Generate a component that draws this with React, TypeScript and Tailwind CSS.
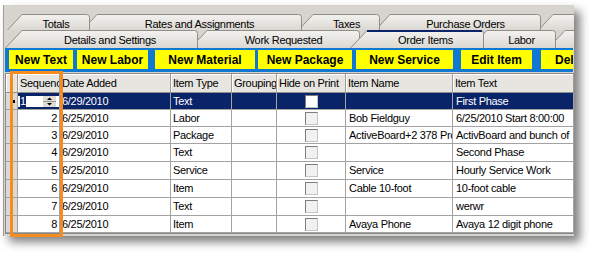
import React from "react";

type TabProps = {
  label: string;
  w: number;
  h: number;
  s: number;
  cls: string;
  id: string;
  selected?: boolean;
  labelCls: string;
};

function Tab({ label, w, h, s, cls, id, selected, labelCls }: TabProps) {
  const d = `M0.5,${h + 1} L${s},0.5 L${w - 3.5},0.5 Q${w - 0.5},0.5 ${w - 0.5},3.5 L${w - 0.5},${h + 1}`;
  return (
    <div className={`relative shrink-0 ${cls}`}>
      <svg className="absolute left-0 top-0" width={w} height={h + 1} viewBox={`0 0 ${w} ${h + 1}`}>
        <defs>
          <linearGradient id={id} x1="0" y1="0" x2="0" y2="1">
            <stop offset="0" stopColor="#f3f2ef" />
            <stop offset="1" stopColor="#dbd8d2" />
          </linearGradient>
        </defs>
        <path d={d} fill={`url(#${id})`} stroke="#8e8d8a" strokeWidth="1" />
        {selected && <line x1={s} y1="1" x2={w - 2} y2="1" stroke="#0a246a" strokeWidth="2" />}
      </svg>
      <div className={`relative flex h-full justify-center whitespace-nowrap text-[11px] leading-none tracking-[-0.3px] text-black ${labelCls}`}>
        {label}
      </div>
    </div>
  );
}

const colW = ["w-[12px]", "w-[42px]", "w-[111px]", "w-[61px]", "w-[45px]", "w-[69px]", "w-[107px]", "w-[121px]"];

const rows = [
  { seq: "1", date: "6/29/2010", type: "Text", name: "", text: "First Phase", sel: true, h: "h-[17px]" },
  { seq: "2", date: "6/25/2010", type: "Labor", name: "Bob Fieldguy", text: "6/25/2010 Start 8:00:00", h: "h-[17px]" },
  { seq: "3", date: "6/29/2010", type: "Package", name: "ActiveBoard+2 378 Pro", text: "ActivBoard and bunch of", h: "h-[17px]" },
  { seq: "4", date: "6/29/2010", type: "Text", name: "", text: "Second Phase", h: "h-[18px]" },
  { seq: "5", date: "6/25/2010", type: "Service", name: "Service", text: "Hourly Service Work", h: "h-[18px]" },
  { seq: "6", date: "6/29/2010", type: "Item", name: "Cable 10-foot", text: "10-foot cable", h: "h-[18px]" },
  { seq: "7", date: "6/29/2010", type: "Text", name: "", text: "werwr", h: "h-[18px]" },
  { seq: "8", date: "6/25/2010", type: "Item", name: "Avaya Phone", text: "Avaya 12 digit phone", h: "h-[17px]" },
];

function Check({ white }: { white?: boolean }) {
  return (
    <div
      className={`h-[13px] w-[13px] border border-b-[#c4c4c4] border-l-[#7c7c7c] border-r-[#c4c4c4] border-t-[#7c7c7c] ${
        white ? "bg-white" : "bg-[#f1f1f1]"
      }`}
    />
  );
}

function Spinner() {
  return (
    <svg width="13" height="11" viewBox="0 0 13 11">
      <rect x="0" y="0" width="13" height="11" fill="#dedbd5" />
      <line x1="0" y1="5.5" x2="13" y2="5.5" stroke="#9a9893" strokeWidth="1" />
      <path d="M4,4 L6.5,1.5 L9,4 Z" fill="#000" />
      <path d="M4,7 L9,7 L6.5,9.5 Z" fill="#000" />
    </svg>
  );
}

const buttons = [
  { label: "New Text", cls: "w-[64px] ml-[4px]" },
  { label: "New Labor", cls: "w-[71px] ml-[4px]" },
  { label: "New Material", cls: "w-[100px] ml-[7px]" },
  { label: "New Package", cls: "w-[94px] ml-[3px]" },
  { label: "New Service", cls: "w-[97px] ml-[4px]" },
  { label: "Edit Item", cls: "w-[71px] ml-[8px]" },
  { label: "Delete Item", cls: "w-[92px] ml-[9px]" },
];

export default function App() {
  return (
    <div className="relative h-[253px] w-[589px] overflow-hidden bg-white font-['Liberation_Sans',Arial,sans-serif] text-black">
      <div className="ml-[3px] mt-[5px] h-[231px] w-[571px] overflow-hidden border-l border-[#a09e9a] bg-[#d7d4cf] shadow-[6px_6px_9px_rgba(0,0,0,0.5)]">
        {/* tab row 1 */}
        <div className="ml-[3px] mt-[9px] flex h-[16px]">
          <Tab id="t1" label="Totals" w={83} h={15} s={15} cls="w-[83px] z-50" labelCls="pl-[15px] pt-[5px]" />
          <Tab id="t2" label="Rates and Assignments" w={220} h={15} s={15} cls="w-[220px] -ml-[8px] z-40" labelCls="pl-[15px] pt-[5px]" />
          <Tab id="t3" label="Taxes" w={82} h={15} s={15} cls="w-[82px] -ml-[4px] z-30" labelCls="pl-[15px] pt-[5px]" />
          <Tab id="t4" label="Purchase Orders" w={166} h={15} s={15} cls="w-[166px] -ml-[5px] z-20" labelCls="pl-[15px] pt-[5px]" />
          <Tab id="t5" label="" w={42} h={15} s={15} cls="w-[42px] -ml-[3px] z-10" labelCls="pl-[15px] pt-[5px]" />
        </div>
        {/* tab row 2 */}
        <div className="relative z-[60] ml-px flex h-[18px]">
          <Tab id="r1" label="Details and Settings" w={193} h={17} s={17} cls="w-[193px] z-50" labelCls="pl-[17px] pt-[5px]" />
          <Tab id="r2" label="Work Requested" w={170} h={17} s={17} cls="w-[170px] -ml-[8px] z-40" labelCls="pl-[17px] pt-[5px]" />
          <Tab id="r3" label="Order Items" w={134} h={17} s={17} cls="w-[134px] -ml-[10px] z-[60]" labelCls="pl-[17px] pt-[5px]" selected />
          <Tab id="r4" label="Labor" w={86} h={17} s={17} cls="w-[86px] -ml-[14px] z-30" labelCls="pl-[17px] pt-[5px]" />
          <Tab id="r5" label="" w={42} h={17} s={17} cls="w-[42px] -ml-[8px] z-20" labelCls="pl-[17px] pt-[5px]" />
        </div>
        {/* toolbar */}
        <div className="relative z-[61] ml-px flex h-[24px] w-[568px] overflow-hidden bg-[#0e78d2] pt-[2px]">
          {buttons.map((b) => (
            <div
              key={b.label}
              className={`flex h-[19px] shrink-0 items-center justify-center whitespace-nowrap bg-[#ffff00] text-[12px] font-bold leading-none ${b.cls}`}
            >
              {b.label}
            </div>
          ))}
        </div>
        {/* grid */}
        <div className="ml-px mt-px w-[569px] border-b border-l border-t border-[#8a8a8a] bg-white text-[11px] leading-none tracking-[-0.3px]">
          <div className="flex h-[19px] border-b border-[#8f8e8a]">
            {["", "Sequence", "Date Added", "Item Type", "Grouping", "Hide on Print", "Item Name", "Item Text"].map((h, i) => (
              <div
                key={i}
                className={`flex h-full shrink-0 items-center overflow-hidden whitespace-nowrap border-r border-[#9d9c98] bg-[#e7e5e0] pl-[2px] shadow-[inset_1px_1px_0_#ffffff] ${colW[i]}`}
              >
                {h}
              </div>
            ))}
          </div>
          {rows.map((r) => {
            const cell = `flex h-full shrink-0 items-center overflow-hidden whitespace-nowrap border-r border-b border-[#a3a3a3]`;
            const bg = r.sel ? "bg-[#0a246a] text-white" : "bg-white text-black";
            return (
              <div key={r.seq} className={`flex ${r.h}`}>
                <div className={`${cell} ${colW[0]} bg-[#dcd9d4]`}>
                  {r.sel && <div className="ml-[7px] h-[3px] w-[2px] bg-black" />}
                </div>
                {r.sel ? (
                  <div className={`${cell} ${colW[1]} ${bg}`}>
                    <div className="flex h-[11px] w-[41px] items-center bg-white">
                      <div className="ml-[2px] flex h-[11px] w-[6px] items-center justify-center bg-[#0a246a] text-white">1</div>
                      <div className="ml-[17px]">
                        <Spinner />
                      </div>
                    </div>
                  </div>
                ) : (
                  <div className={`${cell} ${colW[1]} ${bg} justify-end pr-[2px]`}>{r.seq}</div>
                )}
                <div className={`${cell} ${colW[2]} ${bg} pl-[2px]`}>{r.date}</div>
                <div className={`${cell} ${colW[3]} ${bg} pl-[2px]`}>{r.type}</div>
                <div className={`${cell} ${colW[4]} ${bg}`} />
                <div className={`${cell} ${colW[5]} ${bg} justify-center`}>
                  <Check white={r.sel} />
                </div>
                <div className={`${cell} ${colW[6]} ${bg} pl-[3px]`}>{r.name}</div>
                <div className={`${cell} ${colW[7]} ${bg} pl-[3px]`}>{r.text}</div>
              </div>
            );
          })}
        </div>
      </div>
      {/* orange highlight annotation */}
      <div className="pointer-events-none absolute left-[10px] top-[71px] z-[70] h-[166px] w-[53px] border-[3px] border-[#f68b1f]" />
    </div>
  );
}
